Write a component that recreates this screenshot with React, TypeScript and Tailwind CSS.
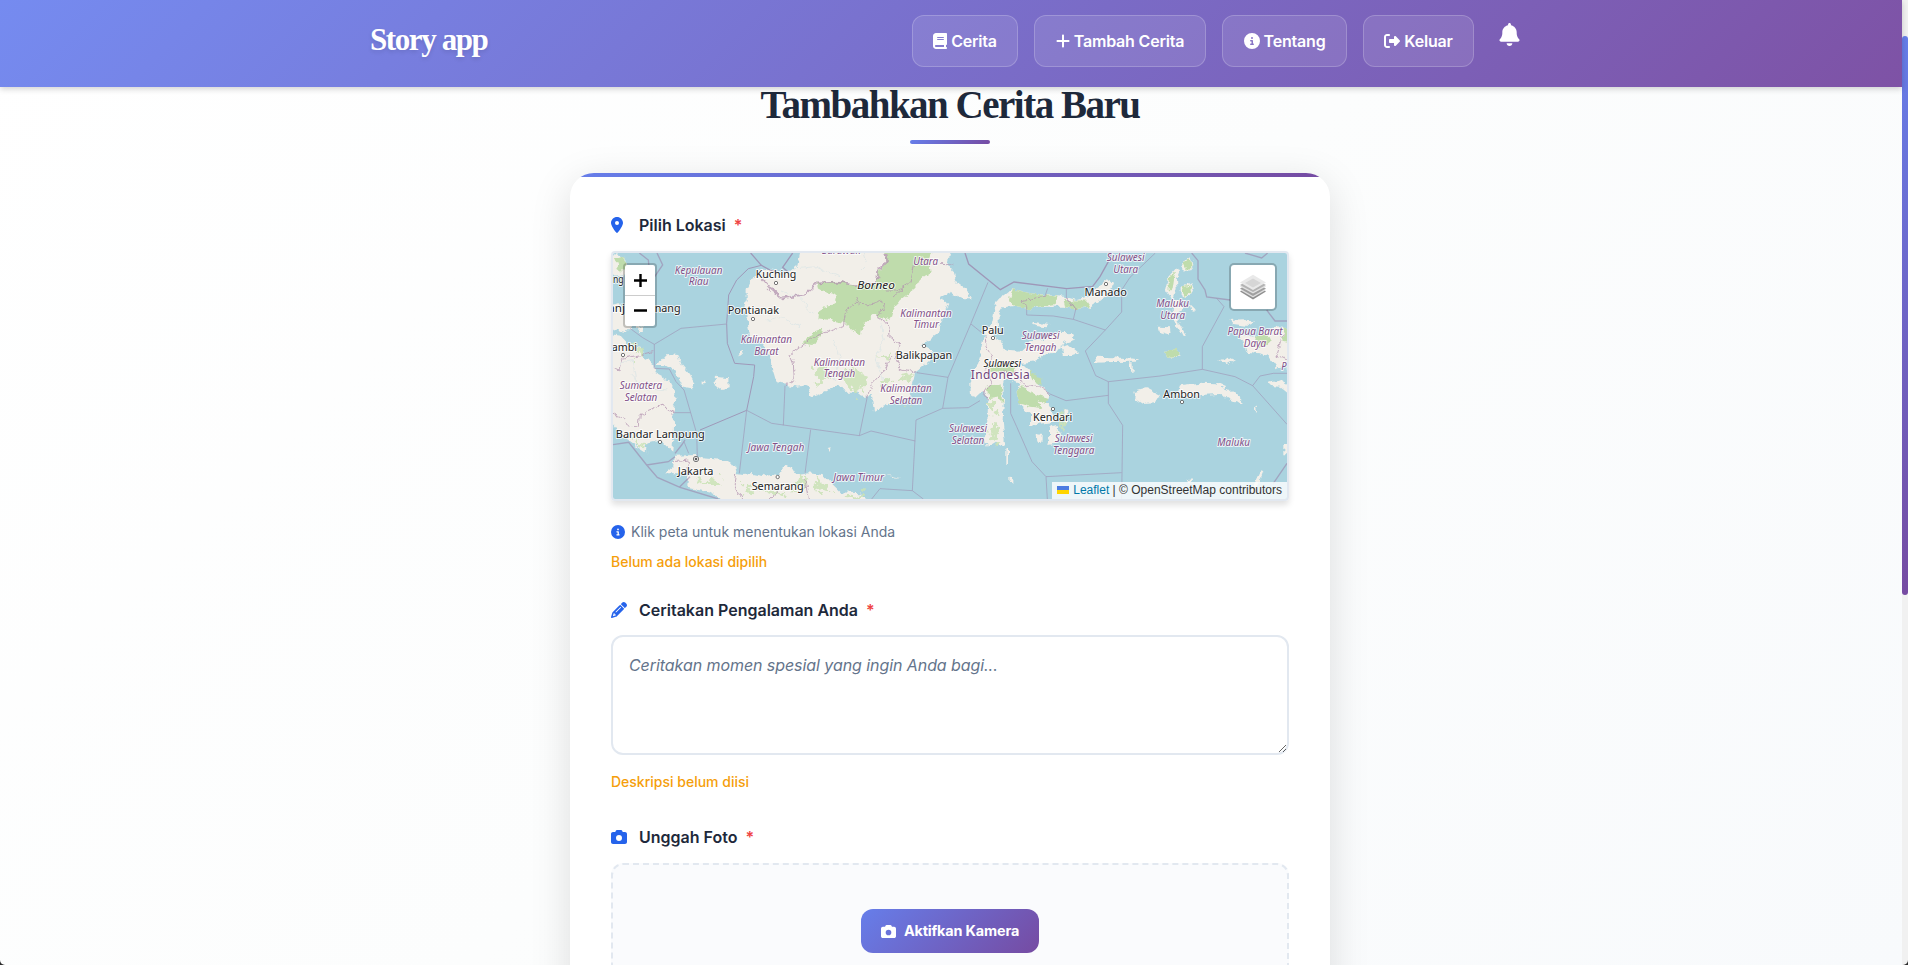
import React from "react";
import {
  FaBell, FaBook, FaCamera, FaCircleInfo, FaLocationDot, FaPencil, FaPlus, FaRightFromBracket,
} from "react-icons/fa6";

type Label = [text: string, x: number, y: number, width: number];

const cities: Label[] = [
  ["Kuching", 528, 115, 122], ["Pontianak", 460, 223, 154], ["Bandar Lampung", 181, 594, 267],
  ["Jakarta", 287, 704, 107], ["Semarang", 533, 749, 156], ["Balikpapan", 972, 356, 170],
  ["Palu", 1178, 283, 66], ["Manado", 1517, 168, 127], ["Kendari", 1358, 543, 118], ["Ambon", 1745, 474, 110],
];
const partialCities: Label[] = [
  ["ng", 55, 128, 32], ["anj", 50, 215, 50], ["nang", 203, 215, 78], ["ambi", 73, 333, 76],
];
const regions: Label[] = [
  ["Kepulauan", 296, 101, 143], ["Riau", 296, 136, 60], ["Kalimantan", 499, 309, 154], ["Barat", 499, 344, 73],
  ["Kalimantan", 718, 377, 154], ["Tengah", 718, 412, 95], ["Kalimantan", 978, 230, 154], ["Timur", 978, 265, 77],
  ["Kalimantan", 918, 456, 154], ["Selatan", 918, 492, 98], ["Sumatera", 123, 447, 127], ["Selatan", 123, 483, 98],
  ["Jawa Tengah", 528, 632, 170], ["Jawa Timur", 776, 724, 152], ["Utara", 977, 74, 74], ["Sarawak", 724, 42, 116],
  ["Sulawesi", 1577, 62, 114], ["Utara", 1577, 98, 74], ["Sulawesi", 1322, 298, 114], ["Tengah", 1322, 334, 95],
  ["Sulawesi", 1104, 575, 114], ["Selatan", 1104, 611, 98], ["Sulawesi", 1421, 606, 114], ["Tenggara", 1421, 642, 124],
  ["Maluku", 1718, 202, 98], ["Utara", 1718, 238, 74], ["Papua Barat", 1965, 285, 165], ["Daya", 1965, 321, 67],
  ["Maluku", 1901, 619, 98], ["Pa", 2060, 390, 32],
];
const dots = [
  [528, 129], [459, 237], [69, 345], [180, 606], [533, 711], [972, 318], [1179, 294], [1518, 132], [1359, 507], [1746, 486],
];

function IslandMap() {
  return (
    <svg viewBox="39 39 2022 738" className="block h-full w-full" preserveAspectRatio="none" fontFamily="'Noto Sans', sans-serif">
      <defs>
        <filter id="coast" filterUnits="userSpaceOnUse" x="0" y="0" width="2100" height="800">
          <feTurbulence type="fractalNoise" baseFrequency="0.05" numOctaves="3" seed="4" result="n" />
          <feDisplacementMap in="SourceGraphic" in2="n" scale="20" xChannelSelector="R" yChannelSelector="G" />
        </filter>
        <filter id="speckle" filterUnits="userSpaceOnUse" x="0" y="0" width="2100" height="800">
          <feTurbulence type="fractalNoise" baseFrequency="0.045" numOctaves="3" seed="9" result="n" />
          <feDisplacementMap in="SourceGraphic" in2="n" scale="60" xChannelSelector="R" yChannelSelector="G" />
        </filter>
      </defs>
      <rect x="39" y="39" width="2022" height="738" fill="#aad3df" />
      <g fill="#f2efe9" filter="url(#coast)">
        <path d="M602 30L592 75L565 98L500 85L470 93L455 120L440 150L440 180L430 200L442 225L445 262L452 292L482 310L510 345L512 372L522 402L530 430L560 434L590 440L625 435L632 475L660 465L700 445L710 430L735 455L760 455L790 468L815 465L822 515L850 500L890 485L935 470L930 450L940 420L945 398L985 365L1000 335L965 315L1010 282L1020 262L1030 222L1045 188L1018 175L1050 158L1090 175L1116 175L1100 150L1072 130L1062 98L1042 72L1052 30Z" />
        <path d="M30 285L62 290L82 312L122 320L126 350L160 368L162 400L210 425L222 450L235 475L220 500L222 560L217 635L190 610L160 603L132 610L145 640L110 617L60 582L30 545Z" />
        <path d="M30 42L62 45L88 75L75 105L45 110L30 100ZM30 195L60 190L72 220L100 250L75 275L30 265ZM110 262L130 258L132 272L118 276ZM80 120L110 130L120 150L95 150Z" />
        <path d="M172 375L200 342L235 345L245 375L270 405L283 430L275 445L250 440L235 415L225 395L195 375ZM340 430L350 410L385 415L386 445L365 450ZM305 425h12v8h-12ZM413 342L428 336L432 345ZM680 628L692 625L690 635Z" />
        <path d="M195 700L220 680L225 647L290 645L310 655L370 660L405 680L410 702L430 705L460 702L500 710L535 705L555 675L575 680L590 705L625 700L670 705L700 735L722 757L780 760L812 790L390 790L330 755L262 740L265 700L232 700ZM860 704L905 714L880 712Z" />
        <path d="M1178 242L1184 205L1190 180L1215 165L1238 147L1290 160L1340 165L1400 172L1430 180L1470 170L1492 142L1520 118L1542 130L1528 160L1500 180L1470 200L1430 208L1390 200L1340 200L1290 205L1245 198L1210 202L1195 225L1198 265L1180 285L1205 305L1220 332L1258 335L1290 305L1340 295L1365 278L1415 280L1422 300L1390 310L1370 335L1340 345L1300 365L1262 368L1290 395L1320 435L1345 460L1340 490L1355 515L1365 545L1330 550L1290 555L1290 520L1255 490L1250 455L1262 430L1220 410L1210 440L1212 480L1208 540L1215 615L1185 605L1160 620L1155 590L1162 540L1165 485L1150 450L1128 470L1110 465L1108 430L1125 395L1140 350L1145 320L1152 280Z" />
        <path d="M1300 245L1345 255L1340 262L1305 258ZM1380 320L1405 315L1435 340L1420 345L1390 345ZM1350 560L1370 555L1382 580L1370 610L1345 615L1350 590ZM1390 510L1405 512L1402 550L1390 555ZM1310 582L1325 585L1325 605L1312 605ZM1219 628h5v45h-5ZM1225 712L1240 720L1240 728L1225 722ZM1255 735L1275 739" />
        <path d="M1485 350L1540 352L1620 358L1610 365L1540 366L1490 368ZM1590 370h8v28h-8ZM1600 455L1640 445L1680 465L1665 490L1630 492L1605 475ZM1740 436L1800 428L1850 430L1890 448L1925 480L1928 495L1900 485L1855 462L1800 465L1750 475L1730 465ZM1695 465h25v8h-25Z" />
        <path d="M1705 110L1728 85L1740 90L1728 120L1730 150L1720 175L1705 165L1695 150ZM1750 62L1775 55L1780 75L1765 95L1750 88ZM1745 140L1775 130L1782 150L1760 170L1745 165ZM1720 175L1745 185L1745 210L1730 220L1740 255L1758 285L1745 280L1725 250L1715 210ZM1765 190L1788 212L1770 210ZM1675 260L1710 262L1712 285L1695 280L1680 275ZM1695 332L1730 330L1745 350L1700 350Z" />
        <path d="M1888 240L1930 238L1962 250L1945 258L1900 252ZM1905 275L1960 290L2000 275L2030 260L2070 270L2070 370L2030 385L2005 350L1980 340L1940 335L1930 300ZM1855 362L1885 350L1905 360L1880 375ZM2005 425L2035 420L2070 440L2070 465L2040 440L2015 438ZM1965 495L1972 515L1965 512ZM1760 718L1780 715L1765 730ZM1958 745L1985 690L1990 695L1970 745ZM2050 615h15v25h-15Z" />
      </g>
      <g fill="#bfdcac" filter="url(#coast)">
        <path d="M855 30L1000 30L990 60L995 95L960 120L945 145L900 180L880 205L870 242L820 225L785 260L780 285L735 250L690 240L652 235L655 215L705 185L710 165L655 150L650 130L710 125L765 135L830 130L835 95L860 65Z" />
        <path d="M605 310L640 275L670 265L665 285L640 315ZM1238 147L1290 160L1375 170L1370 192L1290 205L1245 198L1230 180ZM1390 180L1470 182L1465 200L1430 208L1395 200ZM1250 455L1262 438L1300 460L1345 475L1340 492L1310 480L1330 505L1290 500L1255 490ZM1160 440L1205 430L1210 490L1190 470L1165 475ZM1165 375L1220 370L1250 380L1240 400L1165 395ZM1290 395L1320 410L1325 435L1300 420Z" />
        <path d="M1750 65L1772 58L1778 75L1762 92ZM1706 115L1725 95L1718 145L1706 155ZM1748 142L1776 135L1774 155L1756 168ZM1695 332L1730 330L1742 348L1700 350ZM1970 285L2000 280L2010 300L1980 325L1965 305ZM2050 265L2070 270V310L2050 305ZM45 55L65 48L85 75L60 98Z" />
      </g>
      <g fill="#cbe3b7" filter="url(#speckle)" opacity=".85">
        <path d="M645 390L675 380L690 400L665 425L650 440ZM710 400L760 380L800 410L790 440L760 448L735 430ZM840 430L870 415L880 435L850 455ZM900 405L940 400L935 430L915 425ZM840 340L875 345L860 365ZM770 455L790 440L785 460ZM920 485L935 482L930 500ZM100 310L125 315L122 345L105 345ZM90 585L120 600L140 625L120 615ZM285 720L350 715L365 735L310 735ZM590 710L620 715L610 745L570 760L600 730ZM480 745L560 760L520 770ZM430 730L470 740L445 765ZM640 720L680 735L700 760L650 750ZM1170 480L1190 490L1180 530L1165 520ZM1180 550L1195 570L1185 605L1165 590ZM1375 530L1400 520L1395 560L1380 575ZM730 765L800 762L800 775L740 775Z" />
      </g>
      <g fill="none" stroke="#c5dde2" strokeWidth="2" opacity=".6" filter="url(#coast)">
        <path d="M790 39L800 70L780 90M600 85L650 80L720 110M540 150L600 175L640 220M500 240L540 230L600 260M700 300L720 350L700 420M840 250L850 300L830 350L850 420M60 370L100 360L110 420L150 460M90 400L130 440L200 450" />
      </g>
      <g fill="none" stroke="#9a7fa8" strokeWidth="3" opacity=".7">
        <path strokeWidth="4" d="M452 39L484 76L510 90L547 104M578 39L548 82L565 97" />
        <path strokeWidth="3" d="M484 76L445 86L410 120L386 165L380 250L382 310L404 370L464 375L461 410L440 511L300 570" />
        <path strokeWidth="4" opacity=".8" d="M171 39L188 75L164 110M118 39L145 60L148 90M39 614L86 607L140 675L172 712L240 742L355 777M140 675L205 665L225 650M225 640L245 615L255 600M270 710L238 742" />
        <path strokeWidth="2" d="M90 265L128 293L163 313L163 385L208 387L228 425L252 450L272 518L290 580L292 650M163 313L243 265L380 252M220 518H272M252 605L266 640M440 511L418 700M440 511L515 550L778 587L813 573L946 603M555 437L550 556M802 470L778 587M632 569L615 700M950 398L1044 412L1028 505M1164 127L1113 250L1044 412M1028 505L948 540L937 752M1028 505L1105 503L1140 482M1113 252L1150 282M937 752L840 746L815 777M937 752L970 777" />
        <path strokeWidth="4" d="M1095 39L1106 72L1201 149L1242 126L1400 146L1478 139L1500 110L1525 65L1532 39" />
        <path strokeWidth="2" d="M1666 39L1590 112L1565 150V216L1516 270L1456 333L1487 407L1525 425L1680 408L1807 388L1905 410L1958 437L2061 553M1525 425V490L1568 556L1565 777M1232 430V520L1250 560L1296 665L1338 710L1565 698M1338 710L1342 777M1280 200V225L1360 228L1420 238L1516 270M1343 145L1335 168M1399 148V175L1430 208M1420 238L1428 205M1350 462L1398 482L1525 466M1807 388V320L1872 200L1850 175M1958 437L1980 408L2020 400L2061 400" />
        <path strokeWidth="4" opacity=".8" d="M1775 39L1794 62V117L1815 150L1820 171L1890 180M2000 210L2025 243L2061 243M1935 39L1985 54L2003 39M2061 670L2020 730" />
      </g>
      <g fill="none" stroke="#b393b0" strokeWidth="4" opacity=".75" filter="url(#coast)">
        <path strokeWidth="5" d="M484 115L510 145L545 175L610 167L650 130L715 128L765 135L830 130L835 90L862 62L855 39" />
        <path strokeWidth="3" d="M772 170L765 190L738 210L730 260L700 270L640 290L610 315L570 345L580 370L583 420L555 437M765 190L800 195L845 180L850 205L830 230L865 250L870 290L900 315L885 345L900 385L950 397M870 350L855 390L820 430L802 470M930 130L890 150L860 150M940 75L930 125L880 170M39 385L60 390L68 355L160 335M39 520L65 530L85 558L115 555L118 525L155 510L185 490L200 510L220 518M225 665L265 660L262 710M410 700L405 740L425 777M615 720L625 777M510 777L540 750M1155 282L1158 320L1178 350L1155 390L1172 430L1150 460L1165 480M1200 395L1250 400L1275 440L1310 435L1350 462M1280 200L1265 182L1340 168M1400 172L1430 208M1020 70L1060 72M2050 280L2030 345L2061 360" />
      </g>
      <g fontSize="33" textAnchor="middle" strokeLinejoin="round" paintOrder="stroke">
        <g fill="#814f87" fontSize="32" fontStyle="italic" stroke="#ffffff" strokeOpacity=".75" strokeWidth="6">
          {regions.map(([t, x, y, w], i) => <text key={i} x={x} y={y} textLength={w} lengthAdjust="spacingAndGlyphs">{t}</text>)}
        </g>
        <g fill="#222" stroke="#ffffff" strokeOpacity=".8" strokeWidth="6">
          {[...cities, ...partialCities].map(([t, x, y, w]) => <text key={t} x={x} y={y} textLength={w} lengthAdjust="spacingAndGlyphs">{t}</text>)}
          <text x="828" y="147" fontSize="34" fontStyle="italic" textLength="113" lengthAdjust="spacingAndGlyphs">Borneo</text>
          <text x="1207" y="380" fontSize="30" fontStyle="italic" textLength="113" lengthAdjust="spacingAndGlyphs">Sulawesi</text>
          <text x="1201" y="418" fontSize="36" fill="#71467b" textLength="177">Indonesia</text>
        </g>
      </g>
      <g fill="#fff" stroke="#555" strokeWidth="2.4">
        {dots.map(([x, y]) => <circle key={x} cx={x} cy={y} r="5" />)}
        <circle cx="288" cy="657" r="8" /><circle cx="288" cy="657" r="3" fill="#333" />
      </g>
    </svg>
  );
}

function LayersIcon() {
  return (
    <svg viewBox="0 0 26 26" className="h-[26px] w-[26px]">
      <path d="M0 17.5L13 10.5L26 17.5L13 25.500Z" fill="#8f8f8f" />
      <path d="M0 16L13 9L26 16L13 23.500Z" fill="#dedede" />
      <path d="M0 14.500L13 7.500L26 14.500L13 22Z" fill="#a0a0a0" />
      <path d="M0 12.500L13 5.500L26 12.500L13 19.500Z" fill="#e2e2e2" />
      <path d="M0 11L13 4L26 11L13 18Z" fill="#b3b3b3" />
      <path d="M0 8.500L13 .8L26 8.500L13 16Z" fill="#e9e9e9" />
      <path d="M5 9L13 4.500L21 9L13 13.500Z" fill="#d6d6d6" />
    </svg>
  );
}

function NavItem({ icon, width, children }: { icon: React.ReactNode; width: string; children: React.ReactNode }) {
  return (
    <a className={`flex h-[52px] items-center justify-center gap-1 rounded-xl border border-white/20 bg-white/10 text-base font-semibold tracking-[-0.2px] whitespace-nowrap text-white ${width}`}>
      {icon}
      <span>{children}</span>
    </a>
  );
}

function FieldLabel({ icon, children }: { icon: React.ReactNode; children: React.ReactNode }) {
  return (
    <div className="flex h-6 items-center text-base font-semibold text-[#1e293b]">
      <span className="flex w-7 text-[#2563eb]">{icon}</span>
      <span>{children}</span>
      <span className="ml-2 text-[#ef4444]">*</span>
    </div>
  );
}

export default function App() {
  return (
    <div className="h-[965px] w-full bg-[#2b2b2b] font-['Inter',sans-serif]">
      <div className="flex h-full overflow-hidden rounded-b-[5px]">
        <div className="flex min-w-0 flex-1 flex-col bg-[linear-gradient(135deg,#ffffff_0%,#fcfdfd_50%,#f8fafc_100%)]">
          <header className="z-10 h-[87px] shrink-0 bg-[linear-gradient(135deg,#758bf0_0%,#7e52a5_100%)] shadow-[0_2px_6px_rgba(0,0,0,0.18)]">
            <div className="mx-auto flex w-[1162px] items-start justify-between pt-[15px]">
              <div className="pt-[5px] font-['Liberation_Serif',serif] text-[31px] leading-[40px] font-bold tracking-[-1.4px] text-white [text-shadow:0_2px_4px_rgba(0,0,0,0.12)]">Story app</div>
              <nav className="flex items-start gap-4">
                <NavItem width="w-[106px]" icon={<FaBook className="h-4 w-[14px]" />}>Cerita</NavItem>
                <NavItem width="w-[172px]" icon={<FaPlus className="h-4 w-[14px]" />}>Tambah Cerita</NavItem>
                <NavItem width="w-[125px]" icon={<FaCircleInfo size={16} />}>Tentang</NavItem>
                <NavItem width="w-[111px]" icon={<FaRightFromBracket size={16} />}>Keluar</NavItem>
                <FaBell size={23} className="mt-2 mr-[11px] ml-2 text-white" />
              </nav>
            </div>
          </header>

          <main className="flex min-h-0 flex-1 flex-col items-center pr-0.5">
            <h1 className="-mt-[5px] font-['Liberation_Serif',serif] text-[39px] leading-[46px] font-bold tracking-[-1.5px] whitespace-nowrap text-[#1e293b]">Tambahkan Cerita Baru</h1>
            <div className="mt-3 h-1 w-20 shrink-0 rounded-sm bg-[linear-gradient(135deg,#667eea,#764ba2)]" />

            <section className="mt-[29px] flex h-[900px] w-[760px] shrink-0 flex-col overflow-hidden rounded-3xl bg-white shadow-[0_10px_40px_rgba(0,0,0,0.13)]">
              <div className="h-1 shrink-0 bg-[linear-gradient(90deg,#667eea,#764ba2)]" />
              <div className="flex flex-col px-[41px] pt-9">
                <FieldLabel icon={<FaLocationDot className="h-4 w-3" />}>Pilih Lokasi</FieldLabel>
                <div className="relative mt-[14px] h-[250px] overflow-hidden rounded border-2 border-[#e2e8f0] shadow-[0_4px_6px_rgba(0,0,0,0.12)]">
                  <IslandMap />
                  <div className="absolute top-[10px] left-[10px] flex w-[34px] flex-col rounded border-2 border-black/20 bg-white bg-clip-padding text-black">
                    <span className="flex h-[31px] items-center justify-center border-b border-[#ccc]"><svg width="13" height="13" viewBox="0 0 13 13"><path d="M6.500 0V13M0 6.500H13" stroke="currentColor" strokeWidth="2.4" /></svg></span>
                    <span className="flex h-[30px] items-center justify-center"><svg width="13" height="3" className="-mt-0.5"><path d="M0 1.500H13" stroke="currentColor" strokeWidth="2.4" /></svg></span>
                  </div>
                  <div className="absolute top-[10px] right-[10px] flex h-12 w-12 items-center justify-center rounded-[5px] border-2 border-black/20 bg-white bg-clip-padding">
                    <LayersIcon />
                  </div>
                  <div className="absolute right-0 bottom-0 flex h-[17px] items-center bg-white/80 px-[5px] pb-0.5 font-['Liberation_Sans',sans-serif] text-xs text-[#333]">
                    <svg width="12" height="8" className="mr-1"><path fill="#4c7be1" d="M0 0h12v4H0z" /><path fill="#ffd500" d="M0 4h12v4H0z" /></svg>
                    <span className="whitespace-pre"><span className="text-[#0078a8]">Leaflet</span> | © OpenStreetMap contributors</span>
                  </div>
                </div>

                <div className="mt-[21px] flex h-5 items-center gap-[6px] text-sm text-[#64748b]">
                  <FaCircleInfo size={14} className="text-[#2563eb]" />
                  <span>Klik peta untuk menentukan lokasi Anda</span>
                </div>
                <p className="mt-[10px] h-5 text-sm leading-5 font-medium text-[#f59e0b]">Belum ada lokasi dipilih</p>

                <div className="mt-[26px]"><FieldLabel icon={<FaPencil size={16} />}>Ceritakan Pengalaman Anda</FieldLabel></div>
                <textarea
                  className="mt-[13px] h-[120px] w-full resize-y rounded-xl border-2 border-[#e2e8f0] bg-white px-4 py-4 text-base leading-6 tracking-[-0.07px] placeholder:text-[#64748b] placeholder:italic"
                  placeholder="Ceritakan momen spesial yang ingin Anda bagi..."
                />
                <p className="mt-[17px] h-5 text-sm leading-5 font-medium text-[#f59e0b]">Deskripsi belum diisi</p>

                <div className="mt-[33px]"><FieldLabel icon={<FaCamera size={16} />}>Unggah Foto</FieldLabel></div>
                <div className="mt-[14px] flex h-[200px] items-start justify-center rounded-xl border-2 border-dashed border-[#e2e8f0] bg-[#fafbfd] pt-11">
                  <button className="flex h-11 w-[178px] items-center justify-center gap-2 rounded-xl bg-[linear-gradient(135deg,#667eea,#764ba2)] text-[14.4px] font-bold tracking-[-0.15px] text-white">
                    <FaCamera size={15} />
                    Aktifkan Kamera
                  </button>
                </div>
              </div>
            </section>
          </main>
        </div>
        <div className="w-[6px] shrink-0 bg-[#f1f1f1] pt-9">
          <div className="h-[559px] rounded-[3px] bg-[linear-gradient(180deg,#667eea,#764ba2)]" />
        </div>
      </div>
    </div>
  );
}
